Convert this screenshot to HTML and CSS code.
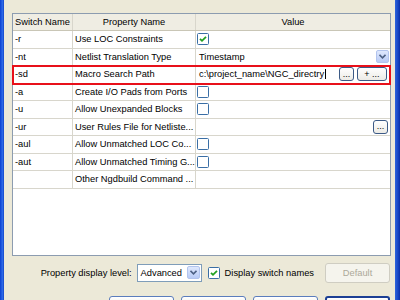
FILE: index.html
```html
<!DOCTYPE html>
<html lang="en">
  <head>
    <meta charset="UTF-8" />
    <title>Process Properties</title>
    <link rel="stylesheet" href="styles.css">
  </head>

  <body>
    <div class="window">
      <div class="frame frame-left"></div>

      <div class="dialog">
        <!-- Property grid -->
        <div class="grid">
          <div class="row head">
            <div class="cell">Switch Name</div>
            <div class="cell">Property Name</div>
            <div class="cell">Value</div>
          </div>

          <div class="row">
            <div class="cell">-r</div>
            <div class="cell">Use LOC Constraints</div>
            <div class="cell">
              <svg class="check" width="12" height="12" viewBox="0 0 12 12"><rect x="0.5" y="0.5" width="11" height="11" rx="1" fill="#fff" stroke="#3a6ea5"/><path d="M3 5.8 L5 7.8 L9 3.8" stroke="#21a121" stroke-width="1.8" fill="none"/></svg>
            </div>
          </div>

          <div class="row">
            <div class="cell">-nt</div>
            <div class="cell">Netlist Translation Type</div>
            <div class="cell value-select">
              <span class="select-text">Timestamp</span>
              <span class="arrow">
                <svg width="7" height="5" viewBox="0 0 7 5"><path d="M0.5 0.8 L3.5 3.8 L6.5 0.8" stroke="#4d6185" stroke-width="1.6" fill="none"/></svg>
              </span>
            </div>
          </div>

          <div class="row selected">
            <div class="cell">-sd</div>
            <div class="cell">Macro Search Path</div>
            <div class="cell value-path">
              <span class="path-text"><span class="caret">c:\project_name\NGC_directry</span></span>
              <span class="small-btn">...</span>
              <span class="small-btn wide">+ ...</span>
            </div>
          </div>

          <div class="row">
            <div class="cell">-a</div>
            <div class="cell">Create I/O Pads from Ports</div>
            <div class="cell">
              <svg class="check" width="12" height="12" viewBox="0 0 12 12"><rect x="0.5" y="0.5" width="11" height="11" rx="1" fill="#fff" stroke="#3a6ea5"/></svg>
            </div>
          </div>

          <div class="row">
            <div class="cell">-u</div>
            <div class="cell">Allow Unexpanded Blocks</div>
            <div class="cell">
              <svg class="check" width="12" height="12" viewBox="0 0 12 12"><rect x="0.5" y="0.5" width="11" height="11" rx="1" fill="#fff" stroke="#3a6ea5"/></svg>
            </div>
          </div>

          <div class="row">
            <div class="cell">-ur</div>
            <div class="cell">User Rules File for Netliste...</div>
            <div class="cell value-browse">
              <span class="small-btn">...</span>
            </div>
          </div>

          <div class="row">
            <div class="cell">-aul</div>
            <div class="cell">Allow Unmatched LOC Co...</div>
            <div class="cell">
              <svg class="check" width="12" height="12" viewBox="0 0 12 12"><rect x="0.5" y="0.5" width="11" height="11" rx="1" fill="#fff" stroke="#3a6ea5"/></svg>
            </div>
          </div>

          <div class="row">
            <div class="cell">-aut</div>
            <div class="cell">Allow Unmatched Timing G...</div>
            <div class="cell">
              <svg class="check" width="12" height="12" viewBox="0 0 12 12"><rect x="0.5" y="0.5" width="11" height="11" rx="1" fill="#fff" stroke="#3a6ea5"/></svg>
            </div>
          </div>

          <div class="row">
            <div class="cell"></div>
            <div class="cell">Other Ngdbuild Command ...</div>
            <div class="cell"></div>
          </div>
        </div>

        <!-- Display options -->
        <div class="settings">
          <span class="label">Property display level:</span>
          <span class="combo">
            <span class="combo-text">Advanced</span>
            <span class="arrow">
              <svg width="7" height="5" viewBox="0 0 7 5"><path d="M0.5 0.8 L3.5 3.8 L6.5 0.8" stroke="#4d6185" stroke-width="1.6" fill="none"/></svg>
            </span>
          </span>
          <svg class="check" width="12" height="12" viewBox="0 0 12 12"><rect x="0.5" y="0.5" width="11" height="11" rx="1" fill="#fff" stroke="#3a6ea5"/><path d="M3 5.8 L5 7.8 L9 3.8" stroke="#21a121" stroke-width="1.8" fill="none"/></svg>
          <span class="label">Display switch names</span>
          <span class="button disabled">Default</span>
        </div>

        <!-- Dialog buttons, only their top edge shows -->
        <div class="buttons">
          <span class="button"></span>
          <span class="button"></span>
          <span class="button"></span>
          <span class="button default"></span>
        </div>
      </div>

      <div class="frame frame-right"></div>
    </div>
  </body>
</html>
```

FILE: styles.css
```css
* {
  margin: 0;
  padding: 0;
  box-sizing: border-box;
}

body {
  width: 400px;
  height: 300px;
  overflow: hidden;
  background-color: #ece9d8;
  font-family: "Liberation Sans", Arial, sans-serif;
  font-size: 9.3px;
  color: #000;
}

.window {
  display: flex;
  height: 300px;
}

.frame {
  flex: none;
  height: 100%;
}

.frame-left {
  width: 4px;
  background: linear-gradient(to right, #0a3fd0, #2d6ae8 60%, #1446c8);
}

.frame-right {
  width: 5px;
  background: linear-gradient(to right, #2d64dc, #1746c4 60%, #0a2fa6);
}

.dialog {
  flex: 1;
  padding: 13px 4px 0 8px;
}

/* property grid */
.grid {
  height: 243px;
  background-color: #fff;
  border: 1px solid #8c9cb0;
}

.row {
  display: grid;
  grid-template-columns: 60px 123px 1fr;
  height: 17.5px;
  border-bottom: 1px solid #d8d6cc;
}

.row.head {
  height: 17px;
  background-color: #efede3;
  border-bottom: 1px solid #c9c6b6;
}

.row.head .cell {
  justify-content: center;
  padding: 0;
}

.cell {
  display: flex;
  align-items: center;
  padding-left: 2px;
  border-right: 1px solid #d8d6cc;
  white-space: nowrap;
  overflow: hidden;
}

.cell:last-child {
  border-right: none;
  padding-left: 1px;
}

.row.selected {
  position: relative;
  z-index: 1;
  outline: 2px solid #e8101a;
  outline-offset: -1px;
}

.check {
  display: block;
  flex: none;
}

.value-select {
  justify-content: space-between;
  padding-right: 1px;
}

.select-text {
  padding-left: 2px;
}

.arrow {
  display: flex;
  align-items: center;
  justify-content: center;
  width: 13px;
  height: 13px;
  background: linear-gradient(to bottom, #dfe8fd, #b8cbf6);
  border: 1px solid #b2c4ee;
  border-radius: 2px;
}

.value-path {
  gap: 3px;
  padding-right: 3px;
}

.path-text {
  flex: 1;
  padding-left: 2px;
}

.caret {
  border-right: 1px solid #000;
  padding-right: 1px;
}

.small-btn {
  display: flex;
  align-items: center;
  justify-content: center;
  width: 15px;
  height: 14px;
  font-size: 9px;
  line-height: 1;
  border: 1px solid #3c5a86;
  border-radius: 3px;
  background: linear-gradient(to bottom, #fff, #ecebe6);
}

.small-btn.wide {
  width: 30px;
}

.value-browse {
  justify-content: flex-end;
  padding-right: 2px;
}

/* bottom options */
.settings {
  display: flex;
  align-items: center;
  justify-content: flex-end;
  height: 21px;
  margin-top: 6px;
  padding-right: 1px;
}

.settings .label {
  margin-right: 5px;
}

.settings .check {
  margin: 0 5px 0 1px;
}

.combo {
  display: flex;
  align-items: center;
  justify-content: space-between;
  width: 65px;
  height: 18px;
  padding: 0 1px 0 3px;
  margin-right: 5px;
  background-color: #fff;
  border: 1px solid #7f9db9;
}

.button {
  display: flex;
  align-items: center;
  justify-content: center;
  width: 65px;
  height: 20px;
  border: 1px solid #5b7dbd;
  border-radius: 3px;
  background: linear-gradient(to bottom, #fff, #ecebe6);
}

.button.disabled {
  margin-left: 6px;
  color: #aca899;
  border-color: #cfcdc2;
  background: #f5f4ed;
}

.buttons {
  display: flex;
  justify-content: flex-end;
  gap: 7px;
  height: 4px;
  margin-top: 13px;
  padding-right: 1px;
  overflow: hidden;
}

.buttons .button {
  flex: none;
  height: 12px;
}

.buttons .button.default {
  border: 2px solid #1c3f94;
}
```
